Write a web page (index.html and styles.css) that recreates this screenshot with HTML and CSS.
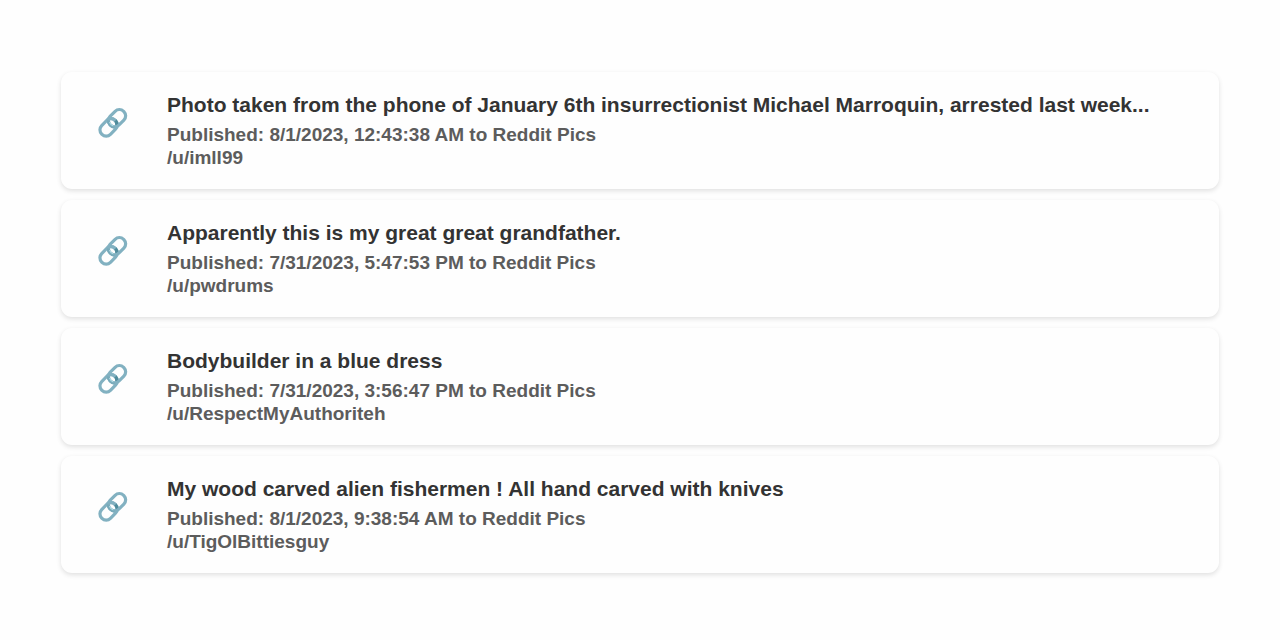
FILE: index.html
```html
<!DOCTYPE html>
<html lang="en">
<head>
<meta charset="utf-8">
<meta name="viewport" content="width=device-width, initial-scale=1">
<title>Reddit Pics</title>
<link rel="stylesheet" href="styles.css">
</head>
<body>
<svg class="defs" aria-hidden="true">
  <symbol id="link" viewBox="0 0 32 32">
    <g fill="none" stroke-width="3.2" stroke="#82b1c1" transform="rotate(-45 16 16)">
      <rect x="0.2" y="9.8" width="19.2" height="12.4" rx="6"/>
      <path d="M16.4 21 Q19.4 19.6 19.4 15" stroke="#4f8b9b"/>
      <rect x="12.6" y="9.2" width="19.2" height="12.4" rx="6"/>
      <path d="M14 9.8 Q19.4 10.2 19.4 16"/>
      <path d="M14 20 Q12.6 18 12.6 15.4 Q12.6 12.5 14.6 11" stroke="#78aaba"/>
      <path d="M14.2 12.8 Q12.8 15.5 14.2 18.4" stroke="#b2dde6" stroke-width="1"/>
    </g>
  </symbol>
</svg>
<main class="feed">
  <article class="card">
    <svg class="icon" role="img" aria-label="Link"><use href="#link"/></svg>
    <div class="body">
      <h2 class="title">Photo taken from the phone of January 6th insurrectionist Michael Marroquin, arrested last week...</h2>
      <p class="meta">Published: 8/1/2023, 12:43:38 AM to Reddit Pics</p>
      <p class="meta">/u/imll99</p>
    </div>
  </article>
  <article class="card">
    <svg class="icon" role="img" aria-label="Link"><use href="#link"/></svg>
    <div class="body">
      <h2 class="title">Apparently this is my great great grandfather.</h2>
      <p class="meta">Published: 7/31/2023, 5:47:53 PM to Reddit Pics</p>
      <p class="meta">/u/pwdrums</p>
    </div>
  </article>
  <article class="card">
    <svg class="icon" role="img" aria-label="Link"><use href="#link"/></svg>
    <div class="body">
      <h2 class="title">Bodybuilder in a blue dress</h2>
      <p class="meta">Published: 7/31/2023, 3:56:47 PM to Reddit Pics</p>
      <p class="meta">/u/RespectMyAuthoriteh</p>
    </div>
  </article>
  <article class="card">
    <svg class="icon" role="img" aria-label="Link"><use href="#link"/></svg>
    <div class="body">
      <h2 class="title">My wood carved alien fishermen ! All hand carved with knives</h2>
      <p class="meta">Published: 8/1/2023, 9:38:54 AM to Reddit Pics</p>
      <p class="meta">/u/TigOlBittiesguy</p>
    </div>
  </article>
</main>
</body>
</html>
```
FILE: styles.css
```css
* { box-sizing: border-box; }
body {
  margin: 0;
  background: #fefefe;
  font-family: "Liberation Sans", Arial, sans-serif;
  font-weight: 700;
}
.defs { display: none; }
.feed {
  display: flex;
  flex-direction: column;
  gap: 11px;
  padding: 72px 61px;
}
.card {
  display: flex;
  align-items: flex-start;
  gap: 38px;
  padding: 20px 36px;
  background: #fefefe;
  border-radius: 11px;
  box-shadow: 0 2px 5px rgba(0, 0, 0, 0.12);
}
.icon {
  flex: none;
  width: 32px;
  height: 32px;
  margin-top: 15px;
}
.body { min-width: 0; }
.title {
  margin: 0 0 5px;
  overflow: hidden;
  font-size: 21px;
  line-height: 26px;
  text-overflow: ellipsis;
  white-space: nowrap;
  color: #333;
}
.meta {
  margin: 0;
  font-size: 19px;
  line-height: 23px;
  color: #5c5c5c;
}
```
